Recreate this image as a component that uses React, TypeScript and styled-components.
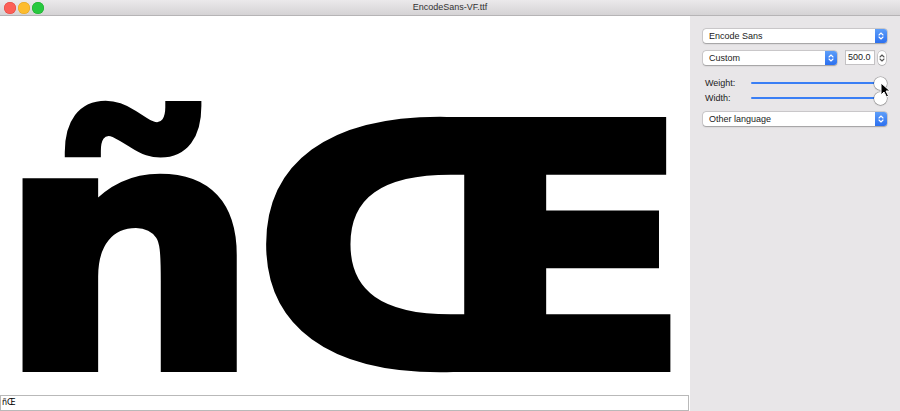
import React from "react";
import styled, { createGlobalStyle } from "styled-components";

const Global = createGlobalStyle`
  html, body { margin: 0; padding: 0; background: #ffffff; }
  body { font-family: "Liberation Sans", Arial, sans-serif; font-size: 9px; color: #1d1d1d; }
  * { box-sizing: border-box; }
`;

const Window = styled.div`
  width: 900px;
  height: 411px;
  display: flex;
  flex-direction: column;
  overflow: hidden;
  position: relative;
  background: #ffffff;
`;

const TitleBar = styled.div`
  height: 16px;
  flex: none;
  display: flex;
  align-items: center;
  justify-content: center;
  position: relative;
  background: linear-gradient(#ebe9eb, #d5d3d5);
  border-bottom: 1px solid #b6b4b6;
`;

const Lights = styled.div`
  position: absolute;
  left: 4px;
  top: 2px;
  display: flex;
  gap: 2px;
`;

const Light = styled.span<{ $c: string; $b: string }>`
  width: 12px;
  height: 12px;
  border-radius: 50%;
  background: ${(p) => p.$c};
  box-shadow: inset 0 0 0 0.5px ${(p) => p.$b};
`;

const Title = styled.span`
  font-size: 9px;
  color: #333333;
  line-height: 1;
`;

const Main = styled.div`
  flex: 1;
  display: flex;
  min-height: 0;
`;

const LeftPane = styled.div`
  width: 690px;
  display: flex;
  flex-direction: column;
`;

const Canvas = styled.div`
  flex: 1;
  overflow: hidden;
  background: #ffffff;
  padding: 67px 0 0 0;
`;

const Glyphs = styled.div`
  font-family: "DejaVu Sans", sans-serif;
  font-weight: bold;
  font-size: 336px;
  line-height: 1;
  white-space: nowrap;
  color: #000;
  -webkit-text-stroke: 10px #000;
`;

const Glyph = styled.span<{ $sx: number; $ml: number }>`
  display: inline-block;
  margin-left: ${(p) => p.$ml}px;
  transform: scaleX(${(p) => p.$sx});
  transform-origin: 0 0;
`;

const SampleField = styled.div`
  height: 16px;
  flex: none;
  border: 1px solid #b9b9b9;
  margin-right: 1px;
  background: #fff;
  font-family: "DejaVu Sans", sans-serif;
  font-size: 8px;
  line-height: 14px;
  padding-left: 1px;
  color: #000;
`;

const Sidebar = styled.div`
  flex: 1;
  background: #e8e6e8;
  padding: 13px 13px 0 13px;
  display: flex;
  flex-direction: column;
`;

const Popup = styled.div<{ $w?: number }>`
  height: 14px;
  width: ${(p) => (p.$w ? `${p.$w}px` : "100%")};
  flex: none;
  display: flex;
  align-items: center;
  background: #ffffff;
  border-radius: 3px;
  box-shadow: 0 0 0 0.5px rgba(0, 0, 0, 0.18), 0 0.5px 1.5px rgba(0, 0, 0, 0.25);
`;

const PopupLabel = styled.span`
  flex: 1;
  padding-left: 6px;
  font-size: 9px;
  color: #222;
`;

const PopupArrows = styled.span`
  width: 12px;
  height: 14px;
  border-radius: 0 3px 3px 0;
  background: linear-gradient(#5d9ef9, #2c70ef);
  display: flex;
  align-items: center;
  justify-content: center;
`;

const Row = styled.div<{ $mt: number }>`
  display: flex;
  align-items: center;
  margin-top: ${(p) => p.$mt}px;
`;

const NumberField = styled.div`
  margin-left: 8px;
  width: 30px;
  height: 15px;
  background: #fff;
  border: 1px solid #c4c2c4;
  box-shadow: inset 0 0.5px 0 rgba(0,0,0,0.08);
  font-size: 9px;
  line-height: 13px;
  padding-left: 2px;
  color: #222;
`;

const Stepper = styled.span`
  margin-left: 3px;
  width: 8px;
  height: 14px;
  border-radius: 4px;
  background: #fff;
  box-shadow: 0 0 0 0.5px rgba(0, 0, 0, 0.25), 0 0.5px 1px rgba(0, 0, 0, 0.2);
  display: flex;
  align-items: center;
  justify-content: center;
`;

const SliderRow = styled.div<{ $mt: number }>`
  height: 14px;
  display: flex;
  align-items: center;
  margin-top: ${(p) => p.$mt}px;
  padding-left: 2px;
`;

const SliderLabel = styled.span`
  width: 46px;
  font-size: 9px;
  color: #222;
`;

const Track = styled.div`
  flex: 1;
  height: 14px;
  display: flex;
  align-items: center;
  position: relative;
`;

const TrackFill = styled.div`
  flex: 1;
  height: 2px;
  border-radius: 1px;
  background: #3a7ff5;
`;

const Thumb = styled.span`
  width: 13px;
  height: 13px;
  border-radius: 50%;
  background: #fff;
  margin-left: -1px;
  box-shadow: 0 0 0 0.5px rgba(0, 0, 0, 0.3), 0 0.5px 1.5px rgba(0, 0, 0, 0.3);
`;

const Cursor = styled.svg`
  position: absolute;
  left: 880px;
  top: 82px;
  width: 11px;
  height: 16px;
`;

const Chevrons = ({ color }: { color: string }) => (
  <svg width="6" height="10" viewBox="0 0 6 10">
    <path d="M1 4 L3 2 L5 4" fill="none" stroke={color} strokeWidth="1.1" strokeLinecap="round" strokeLinejoin="round" />
    <path d="M1 6 L3 8 L5 6" fill="none" stroke={color} strokeWidth="1.1" strokeLinecap="round" strokeLinejoin="round" />
  </svg>
);

const Slider = ({ label, mt }: { label: string; mt: number }) => (
  <SliderRow $mt={mt}>
    <SliderLabel>{label}</SliderLabel>
    <Track>
      <TrackFill />
      <Thumb />
    </Track>
  </SliderRow>
);

export default function App() {
  return (
    <Window>
      <Global />
      <TitleBar>
        <Lights>
          <Light $c="#fc5f57" $b="#e0443e" />
          <Light $c="#fdbc2e" $b="#dea123" />
          <Light $c="#28c840" $b="#1aab29" />
        </Lights>
        <Title>EncodeSans-VF.ttf</Title>
      </TitleBar>
      <Main>
        <LeftPane>
          <Canvas>
            <Glyphs>
              <Glyph $sx={1.1} $ml={-3}>ñ</Glyph>
              <Glyph $sx={1.12} $ml={17}>Œ</Glyph>
            </Glyphs>
          </Canvas>
          <SampleField>ñŒ</SampleField>
        </LeftPane>
        <Sidebar>
          <Popup>
            <PopupLabel>Encode Sans</PopupLabel>
            <PopupArrows>
              <Chevrons color="#ffffff" />
            </PopupArrows>
          </Popup>
          <Row $mt={7}>
            <Popup $w={134}>
              <PopupLabel>Custom</PopupLabel>
              <PopupArrows>
                <Chevrons color="#ffffff" />
              </PopupArrows>
            </Popup>
            <NumberField>500.0</NumberField>
            <Stepper>
              <Chevrons color="#555555" />
            </Stepper>
          </Row>
          <Slider label="Weight:" mt={11} />
          <Slider label="Width:" mt={1} />
          <Row $mt={7}>
            <Popup>
              <PopupLabel>Other language</PopupLabel>
              <PopupArrows>
                <Chevrons color="#ffffff" />
              </PopupArrows>
            </Popup>
          </Row>
        </Sidebar>
      </Main>
      <Cursor viewBox="0 0 11 16">
        <path d="M1 1 L1 13 L4 10 L6.5 15 L8.5 14 L6 9 L10 9 Z" fill="#000" stroke="#fff" strokeWidth="1" strokeLinejoin="round" />
      </Cursor>
    </Window>
  );
}
